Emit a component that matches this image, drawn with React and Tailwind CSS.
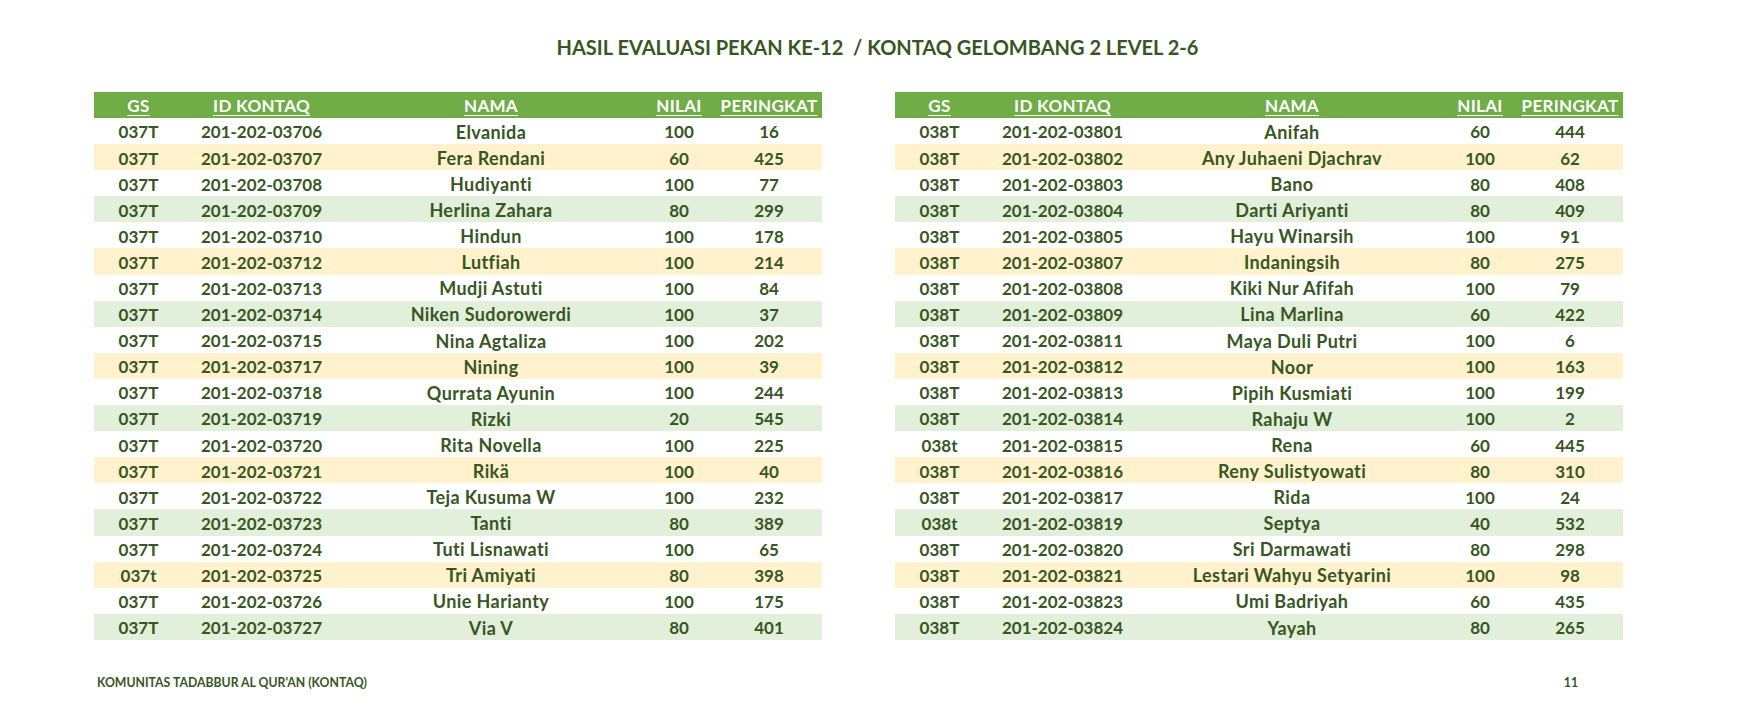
import React from 'react';

const left = [
  ['037T', '201-202-03706', 'Elvanida', '100', '16'],
  ['037T', '201-202-03707', 'Fera Rendani', '60', '425'],
  ['037T', '201-202-03708', 'Hudiyanti', '100', '77'],
  ['037T', '201-202-03709', 'Herlina Zahara', '80', '299'],
  ['037T', '201-202-03710', 'Hindun', '100', '178'],
  ['037T', '201-202-03712', 'Lutfiah', '100', '214'],
  ['037T', '201-202-03713', 'Mudji Astuti', '100', '84'],
  ['037T', '201-202-03714', 'Niken Sudorowerdi', '100', '37'],
  ['037T', '201-202-03715', 'Nina Agtaliza', '100', '202'],
  ['037T', '201-202-03717', 'Nining', '100', '39'],
  ['037T', '201-202-03718', 'Qurrata Ayunin', '100', '244'],
  ['037T', '201-202-03719', 'Rizki', '20', '545'],
  ['037T', '201-202-03720', 'Rita Novella', '100', '225'],
  ['037T', '201-202-03721', 'Rikä', '100', '40'],
  ['037T', '201-202-03722', 'Teja Kusuma W', '100', '232'],
  ['037T', '201-202-03723', 'Tanti', '80', '389'],
  ['037T', '201-202-03724', 'Tuti Lisnawati', '100', '65'],
  ['037t', '201-202-03725', 'Tri Amiyati', '80', '398'],
  ['037T', '201-202-03726', 'Unie Harianty', '100', '175'],
  ['037T', '201-202-03727', 'Via V', '80', '401'],
];

const right = [
  ['038T', '201-202-03801', 'Anifah', '60', '444'],
  ['038T', '201-202-03802', 'Any Juhaeni Djachrav', '100', '62'],
  ['038T', '201-202-03803', 'Bano', '80', '408'],
  ['038T', '201-202-03804', 'Darti Ariyanti', '80', '409'],
  ['038T', '201-202-03805', 'Hayu Winarsih', '100', '91'],
  ['038T', '201-202-03807', 'Indaningsih', '80', '275'],
  ['038T', '201-202-03808', 'Kiki Nur Afifah', '100', '79'],
  ['038T', '201-202-03809', 'Lina Marlina', '60', '422'],
  ['038T', '201-202-03811', 'Maya Duli Putri', '100', '6'],
  ['038T', '201-202-03812', 'Noor', '100', '163'],
  ['038T', '201-202-03813', 'Pipih Kusmiati', '100', '199'],
  ['038T', '201-202-03814', 'Rahaju W', '100', '2'],
  ['038t', '201-202-03815', 'Rena', '60', '445'],
  ['038T', '201-202-03816', 'Reny Sulistyowati', '80', '310'],
  ['038T', '201-202-03817', 'Rida', '100', '24'],
  ['038t', '201-202-03819', 'Septya', '40', '532'],
  ['038T', '201-202-03820', 'Sri Darmawati', '80', '298'],
  ['038T', '201-202-03821', 'Lestari Wahyu Setyarini', '100', '98'],
  ['038T', '201-202-03823', 'Umi Badriyah', '60', '435'],
  ['038T', '201-202-03824', 'Yayah', '80', '265'],
];

const headers = ['GS', 'ID KONTAQ', 'NAMA', 'NILAI', 'PERINGKAT'];

function rowBg(i) {
  if (i % 2 === 0) return 'bg-white';
  if (i % 4 === 1) return 'bg-[#fff2cc]';
  return 'bg-[#e2efda]';
}

function ScoreTable({ rows }) {
  return (
    <div className="w-[728px]">
      <div className="grid grid-cols-[89px_157px_302px_74px_106px] h-[26px] bg-[#70ad47] text-white tracking-[0.3px]">
        {headers.map((h) => (
          <div key={h} className="flex items-center justify-center pt-[1px]">
            <span className="underline underline-offset-[3px] decoration-1">{h}</span>
          </div>
        ))}
      </div>
      {rows.map((r, i) => (
        <div key={r[1]} className={'grid grid-cols-[89px_157px_302px_74px_106px] h-[26.1px] ' + rowBg(i)}>
          {r.map((c, j) => (
            <div
              key={j}
              className={
                'flex items-center justify-center pt-[2px] whitespace-nowrap ' +
                (j === 2 ? 'text-[18px] tracking-[0.4px]' : '')
              }
            >
              {c}
            </div>
          ))}
        </div>
      ))}
    </div>
  );
}

export default function App() {
  return (
    <div className="w-[1737px] h-[719px] bg-white text-[#375623] font-bold font-['Lato',sans-serif] flex flex-col">
      <div className="flex justify-center pl-[18px] pt-[34px] h-[92px]">
        <h1 className="text-[20px] leading-[26px] whitespace-pre">HASIL EVALUASI PEKAN KE-12  / KONTAQ GELOMBANG 2 LEVEL 2-6</h1>
      </div>
      <div className="flex gap-[73px] pl-[94px] text-[17px] leading-tight">
        <ScoreTable rows={left} />
        <ScoreTable rows={right} />
      </div>
      <div className="flex justify-between pl-[97px] w-[1578px] mt-[34px] text-[12.25px]">
        <span>KOMUNITAS TADABBUR AL QUR'AN (KONTAQ)</span>
        <span>11</span>
      </div>
    </div>
  );
}
